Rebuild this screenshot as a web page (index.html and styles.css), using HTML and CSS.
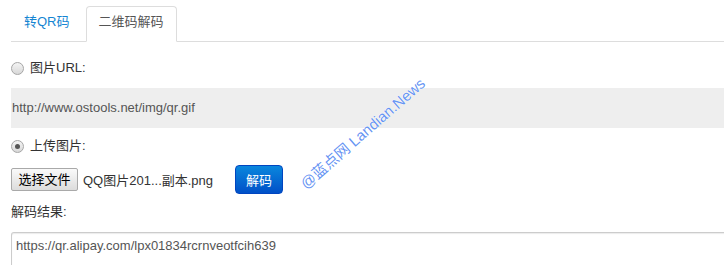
FILE: index.html
```html
<!DOCTYPE html>
<html lang="zh-CN">
<head>
<meta charset="utf-8">
<title>二维码解码</title>
<link rel="stylesheet" href="styles.css">
</head>
<body>
<div class="page">
  <ul class="tabs">
    <li><a class="tab">转QR码</a></li>
    <li><a class="tab active">二维码解码</a></li>
  </ul>

  <label class="radio-row">
    <span class="radio"></span>
    <span>图片URL:</span>
  </label>
  <div class="url-box">http://www.ostools.net/img/qr.gif</div>

  <label class="radio-row second">
    <span class="radio checked"></span>
    <span>上传图片:</span>
  </label>

  <div class="file-row">
    <span class="file-btn">选择文件</span>
    <span class="file-name">QQ图片201...副本.png</span>
    <span class="btn-primary">解码</span>
  </div>

  <div class="result-label">解码结果:</div>
  <div class="result-box">https://qr.alipay.com/lpx01834rcrnveotfcih639</div>

  <div class="watermark">@蓝点网 Landian.News</div>
</div>
</body>
</html>
```

FILE: styles.css
```css
* { box-sizing: border-box; }
html, body { margin: 0; padding: 0; background: #fff; }
body {
  font-family: "Liberation Sans", "Noto Sans CJK SC", sans-serif;
  font-size: 13px;
  color: #333;
  overflow: hidden;
  width: 724px;
  height: 265px;
}
.page {
  position: relative;
  padding-left: 11px;
  height: 265px;
  overflow: hidden;
}
.tabs {
  list-style: none;
  margin: 6px 0 0;
  padding: 0;
  display: flex;
  border-bottom: 1px solid #ddd;
}
.tabs li { margin-bottom: -1px; margin-right: 3px; }
.tab {
  display: block;
  padding: 5px 12px 9px;
  line-height: 20px;
  border: 1px solid transparent;
  border-radius: 4px 4px 0 0;
  color: #1585d2;
}
.tab.active {
  color: #555;
  border-color: #ddd;
  border-bottom-color: #fff;
  background: #fff;
}
.radio-row {
  display: flex;
  align-items: center;
  height: 20px;
  line-height: 20px;
  margin-top: 16px;
  color: #333;
}
.radio-row.second { margin-top: 8px; }
.radio {
  width: 13px;
  height: 13px;
  border-radius: 50%;
  border: 1px solid #a6a6a6;
  background: linear-gradient(#f4f4f4, #d8d8d8);
  margin-right: 6px;
  position: relative;
}
.radio.checked::after {
  content: "";
  position: absolute;
  left: 3px;
  top: 3px;
  width: 5px;
  height: 5px;
  border-radius: 50%;
  background: #555;
}
.url-box {
  margin-top: 10px;
  height: 40px;
  line-height: 40px;
  background: #eee;
  padding-left: 1px;
  color: #555;
}
.file-row {
  display: flex;
  align-items: center;
  height: 29px;
  margin-top: 9px;
}
.file-btn {
  width: 67px;
  height: 23px;
  line-height: 21px;
  text-align: center;
  border: 1px solid #a9a9a9;
  border-radius: 2px;
  background: linear-gradient(#fafafa, #dcdcdc);
  color: #000;
}
.file-name {
  margin-left: 5px;
  width: 152px;
  color: #333;
}
.btn-primary {
  width: 48px;
  height: 29px;
  line-height: 29px;
  text-align: center;
  color: #fff;
  border-radius: 4px;
  border: 1px solid #0045c0;
  background: linear-gradient(#0a87dd, #0050c8);
}
.result-label {
  margin-top: 8px;
  height: 20px;
  line-height: 20px;
}
.result-box {
  margin-top: 10px;
  width: 730px;
  height: 33px;
  border: 1px solid #ccc;
  border-bottom: 0;
  border-radius: 3px 3px 0 0;
  box-shadow: inset 0 1px 1px rgba(0,0,0,0.08);
  padding: 3px 4px;
  line-height: 20px;
  color: #555;
}
.watermark {
  position: absolute;
  left: 284px;
  top: 126px;
  width: 152px;
  font-size: 15px;
  line-height: 20px;
  white-space: nowrap;
  color: rgba(60, 120, 240, 0.8);
  text-shadow: 0 0 1px #fff, 0 0 1px #fff;
  transform: rotate(-41deg);
  transform-origin: center center;
}
```
